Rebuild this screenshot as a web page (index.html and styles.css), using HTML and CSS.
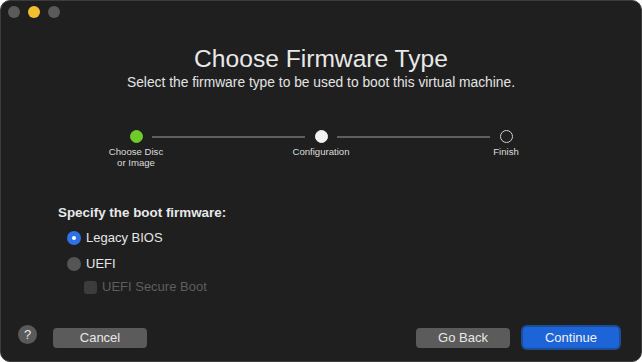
FILE: index.html
```html
<!DOCTYPE html>
<html lang="en">
<head>
  <meta charset="UTF-8">
  <title>Choose Firmware Type</title>
  <link rel="stylesheet" href="styles.css">
</head>
<body>
  <div class="window">
    <div class="titlebar">
      <span class="light"></span>
      <span class="light yellow"></span>
      <span class="light"></span>
    </div>

    <div class="header">
      <h1 class="title">Choose Firmware Type</h1>
      <p class="subtitle">Select the firmware type to be used to boot this virtual machine.</p>
    </div>

    <!-- step progress -->
    <div class="steps">
      <div class="step">
        <span class="dot done"></span>
        <span class="step-label">Choose Disc<br>or Image</span>
      </div>
      <div class="line"></div>
      <div class="step">
        <span class="dot current"></span>
        <span class="step-label">Configuration</span>
      </div>
      <div class="line"></div>
      <div class="step">
        <span class="dot"></span>
        <span class="step-label">Finish</span>
      </div>
    </div>

    <div class="options">
      <div class="options-title">Specify the boot firmware:</div>
      <label class="option first"><span class="radio checked"></span>Legacy BIOS</label>
      <label class="option"><span class="radio"></span>UEFI</label>
      <label class="option sub disabled"><span class="check"></span>UEFI Secure Boot</label>
    </div>

    <div class="footer">
      <span class="help">?</span>
      <button class="btn">Cancel</button>
      <span class="spacer"></span>
      <button class="btn">Go Back</button>
      <button class="btn primary">Continue</button>
    </div>
  </div>
</body>
</html>
```

FILE: styles.css
```css
html, body {
  margin: 0;
  height: 100%;
  background: #ffffff;
}

body {
  font-family: "Liberation Sans", Arial, sans-serif;
  color: #e6e6e6;
}

.window {
  box-sizing: border-box;
  width: 642px;
  height: 362px;
  background: #1f1f1f;
  border: 1px solid #3c3c3c;
  border-radius: 10px;
  display: flex;
  flex-direction: column;
  overflow: hidden;
}

.titlebar {
  display: flex;
  gap: 8px;
  padding: 5px 0 0 7px;
  height: 14px;
}

.light {
  width: 12px;
  height: 12px;
  border-radius: 50%;
  background: #5a5a5a;
}

.light.yellow {
  background: #f4bf2f;
}

.header {
  text-align: center;
  padding-top: 25px;
}

.title {
  margin: 0;
  font-size: 24.6px;
  font-weight: normal;
  color: #e8e8e8;
  line-height: 28px;
}

.subtitle {
  margin: 1px 0 0;
  font-size: 13.8px;
  line-height: 18px;
  color: #e4e4e4;
}

.steps {
  display: flex;
  align-items: flex-start;
  padding: 38px 0 0 119px;
  height: 48px;
}

.step {
  width: 32px;
  display: flex;
  flex-direction: column;
  align-items: center;
}

.dot {
  box-sizing: border-box;
  width: 13px;
  height: 13px;
  border-radius: 50%;
  border: 1px solid #cfcfcf;
}

.dot.done {
  background: #6ecb2a;
  border-color: #6ecb2a;
}

.dot.current {
  background: #f2f2f2;
  border-color: #f2f2f2;
}

.step-label {
  margin-top: 3px;
  font-size: 9.6px;
  line-height: 11px;
  text-align: center;
  white-space: nowrap;
  color: #dcdcdc;
}

.line {
  width: 153px;
  height: 2px;
  margin-top: 6px;
  background: #5f5f5f;
}

.options {
  padding: 26px 0 0 57px;
  display: flex;
  flex-direction: column;
}

.options-title {
  font-size: 13.4px;
  font-weight: bold;
  line-height: 18px;
  color: #e8e8e8;
}

.option {
  display: flex;
  align-items: center;
  gap: 5px;
  font-size: 13px;
  line-height: 18px;
  margin-top: 8px;
  padding-left: 9px;
  color: #e6e6e6;
}

.option.first {
  margin-top: 7px;
}

.option.sub {
  margin-top: 5px;
  padding-left: 26px;
}

.option.disabled {
  color: #5e5e5e;
}

.radio {
  box-sizing: border-box;
  width: 14px;
  height: 14px;
  border-radius: 50%;
  background: #555555;
}

.radio.checked {
  background: #2d73e6;
  position: relative;
}

.radio.checked::after {
  content: "";
  position: absolute;
  left: 5px;
  top: 5px;
  width: 4px;
  height: 4px;
  border-radius: 50%;
  background: #ffffff;
}

.check {
  width: 13px;
  height: 13px;
  border-radius: 3px;
  background: #3c3c3c;
}

.footer {
  margin-top: auto;
  display: flex;
  align-items: center;
  padding: 0 22px 11px 17px;
  gap: 11px;
}

.help {
  width: 19px;
  height: 19px;
  border-radius: 50%;
  background: #5a5a5a;
  color: #e8e8e8;
  font-size: 13px;
  text-align: center;
  line-height: 19px;
  margin: 0 5px 6px 0;
}

.spacer {
  flex: 1;
}

.btn {
  font-family: "Liberation Sans", Arial, sans-serif;
  font-size: 13px;
  color: #e8e8e8;
  background: #5b5b5b;
  border: none;
  border-radius: 4px;
  width: 94px;
  height: 20px;
  padding: 0;
}

.btn.primary {
  width: 96px;
  height: 21px;
  margin-left: 2px;
  background: #1d64d8;
  color: #f2f2f2;
  box-shadow: 0 0 0 2px #1a4f98;
}
```
